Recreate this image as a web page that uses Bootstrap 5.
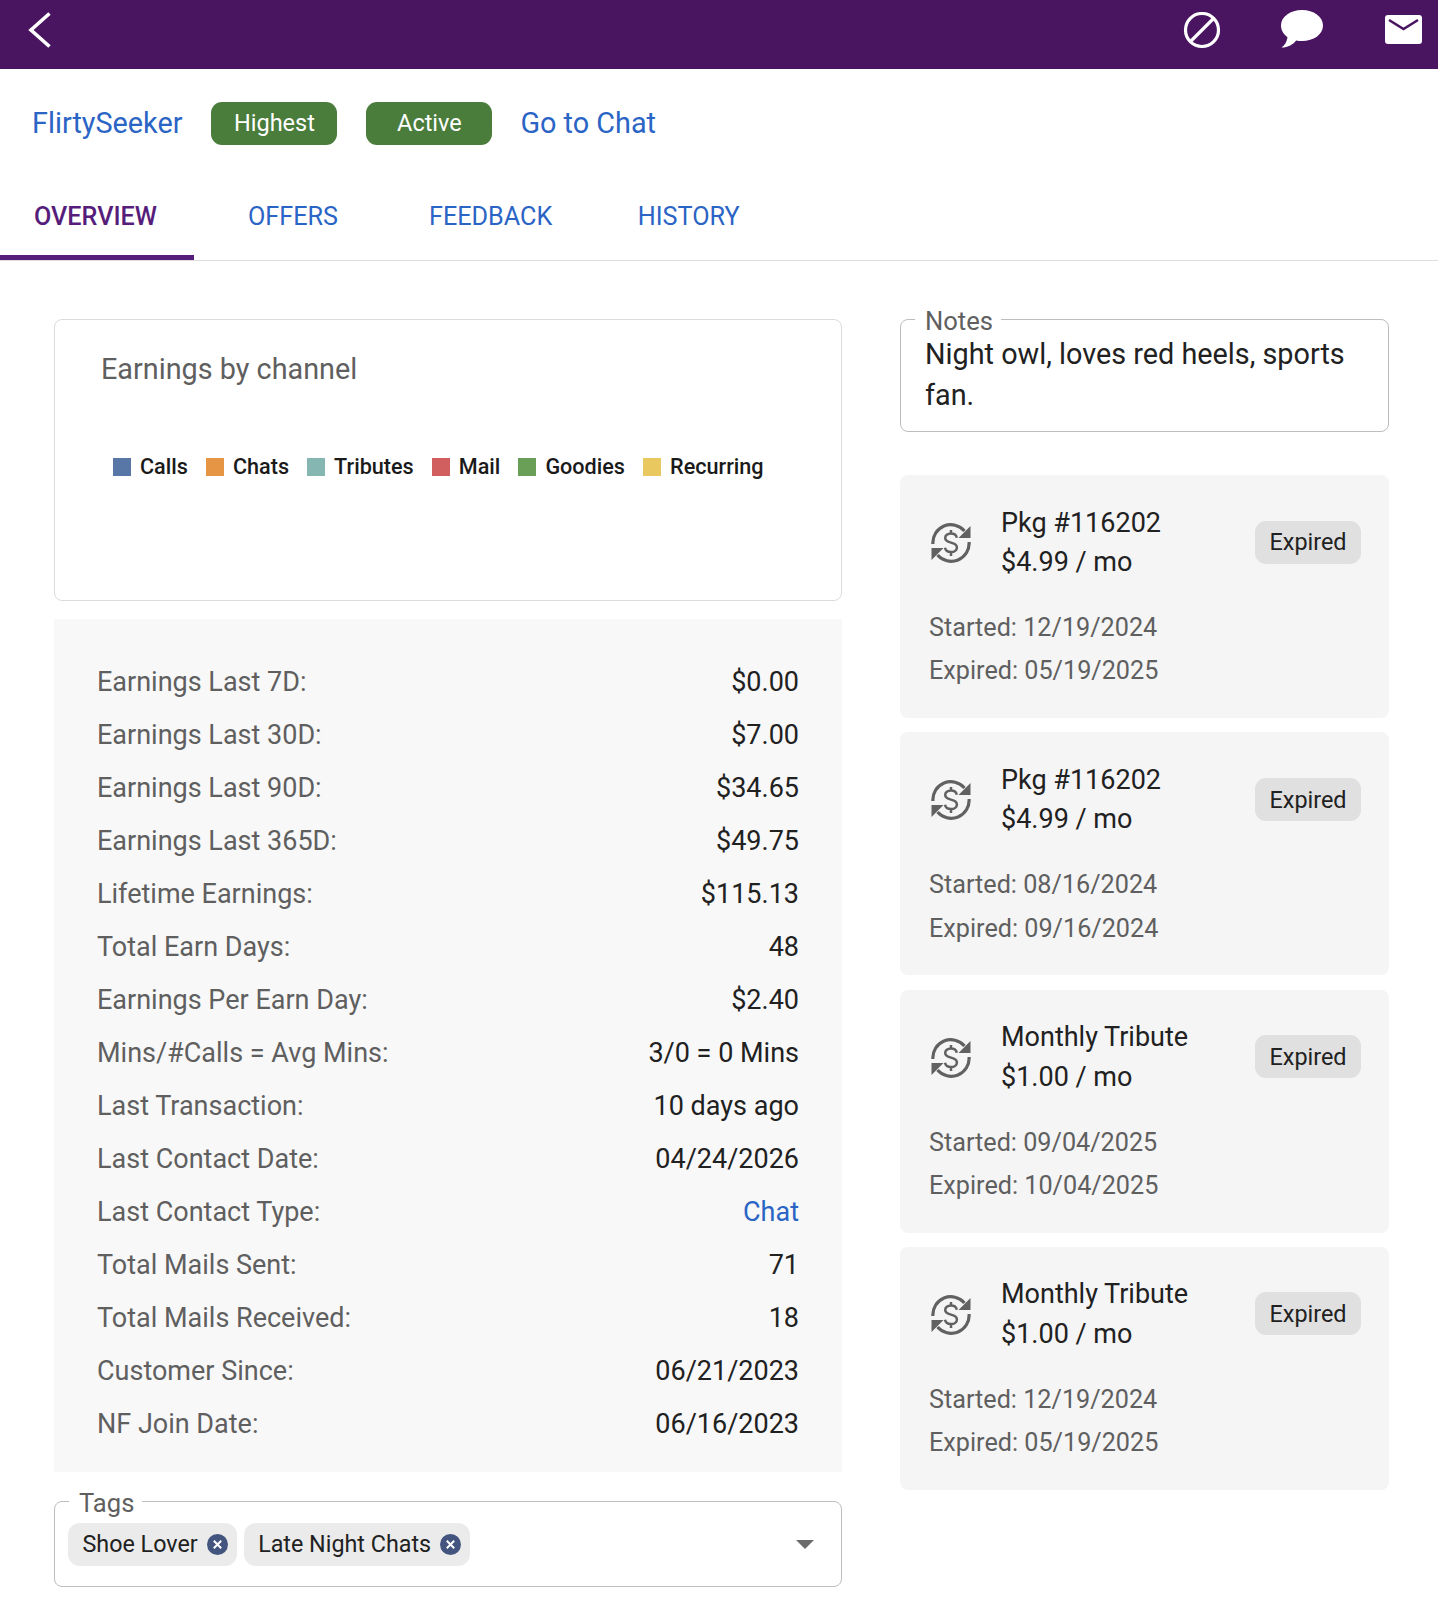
<!DOCTYPE html>
<html lang="en">
<head>
    <meta charset="UTF-8">
    <meta name="viewport" content="width=device-width, initial-scale=1.0">
    <title>Customer Overview</title>
    <link rel="stylesheet" href="https://cdn.jsdelivr.net/npm/bootstrap@5.3.0/dist/css/bootstrap.min.css">
    <style>
        body { font-family: Roboto, "Liberation Sans", sans-serif; font-size: 27px; color: #212121; background: #fff; }
        a { text-decoration: none; color: #2a64c5; }
        .top-bar { height: 69px; background: #4a1560; padding: 12px 16px 0 28px; }
        .top-gap-a { margin-left: auto; }
        .top-gap-b { margin-left: 60px; }
        .top-gap-c { margin-left: 62px; }
        .head-row { height: 43px; margin-top: 33px; padding-left: 32px; font-size: 28.8px; }
        .pill-green { width: 126px; height: 43px; margin-left: 29px; background: #4a7c3c; color: #fff; border-radius: 11px; font-size: 23.5px; }
        .head-link { margin-left: 28px; }
        .tab-row { height: 116px; border-bottom: 1px solid #dedede; }
        .tab-link { font-size: 25.2px; font-weight: 400; height: 115px; padding-top: 53px; display: block; }
        .tab-on { color: #561d7a; font-weight: 500; width: 194px; padding-left: 34px; border-bottom: 5px solid #561d7a; }
        .tab-b { margin-left: 54px; }
        .tab-c { margin-left: 91px; }
        .tab-d { margin-left: 85.5px; }
        .page-body { padding: 58px 49px 0 54px; gap: 58px; }
        .col-left { width: 788px; flex: none; }
        .col-right { width: 489px; flex: none; }
        .chart-box { height: 282px; border: 1px solid #dcdcdc; border-radius: 8px; padding: 31px 46px 0; }
        .chart-title { font-size: 28.8px; line-height: 36px; color: #5f5f5f; }
        .legend-row { margin-top: 66px; padding-left: 12px; gap: 18.1px; font-size: 21.6px; font-weight: 500; line-height: 28px; color: #1a1a1a; }
        .legend-item { gap: 9px; }
        .swatch { width: 18px; height: 18px; }
        .stat-panel { margin-top: 18px; height: 853px; background: #f8f8f8; padding: 37px 43px 0; }
        .stat-line { height: 53px; line-height: 53px; }
        .stat-key { color: #5f5f5f; }
        .field-box { border: 1px solid #bdbdbd; border-radius: 8px; margin: 0; padding: 0 24px; }
        .field-box legend { float: none; width: auto; margin: 0 0 0 -10px; padding: 4px 8px 0 10px; font-size: 25.6px; line-height: 20px; color: #5f5f5f; }
        .notes-text { font-size: 28.8px; line-height: 41px; margin-top: 3px; }
        .notes-box { height: 125px; margin-top: -12px; }
        .pkg-box { height: 243px; background: #f5f5f5; border-radius: 8px; margin-top: 14.3px; padding: 28px 28px 0 29px; }
        .pkg-first { margin-top: 43px; }
        .pkg-head { height: 78px; }
        .pkg-icon { width: 40px; height: 40px; margin: 2px 30px 0 2px; flex: none; }
        .pkg-name { line-height: 39.5px; margin-top: 2px; }
        .pill-grey { width: 106px; height: 43px; padding-top: 2px; background: #e0e0e0; border-radius: 11px; font-size: 23.4px; margin-left: auto; }
        .pkg-meta { margin-top: 25px; color: #5f5f5f; font-size: 25.2px; line-height: 43.4px; }
        .tag-box { height: 98px; margin-top: 17px; padding: 0 27px 0 13px; }
        .tag-box legend { margin-left: 1px; }
        .tag-row { margin-top: 10px; }
        .tag-chip { height: 43px; background: #ebebeb; border-radius: 12px; margin-right: 7px; padding: 0 9px 0 14.5px; font-size: 23.3px; gap: 9px; }
        .tag-x { width: 21px; height: 21px; flex: none; }
        .tag-arrow { margin-left: auto; width: 0; height: 0; border-left: 9px solid transparent; border-right: 9px solid transparent; border-top: 9px solid #6b6b6b; }
    </style>
</head>
<body>
<svg class="d-none">
    <symbol id="pkgIcon" viewBox="0 0 40 40">
        <g fill="none" stroke="#616161" stroke-width="3.2">
            <path d="M1.9 21A18 18 0 0 1 33.5 8"/>
            <path d="M38.1 19A18 18 0 0 1 6.5 32"/>
            <path stroke-width="2.5" d="M25.8 14.7C25.3 12 23.2 10.5 20 10.5c-3.500 0-5.800 1.900-5.800 4.500 0 2.700 2.300 3.800 5.800 4.600 3.500.8 5.900 2 5.900 4.800 0 2.700-2.500 4.600-5.900 4.600-3.300 0-5.500-1.600-6-4.200M20 7v3.500M20 29v4"/>
        </g>
        <path fill="#616161" d="M39.500 3v12h-12zM.5 37v-12h12z"/>
    </symbol>
    <symbol id="tagX" viewBox="0 0 21 21">
        <circle cx="10.500" cy="10.500" r="10.500" fill="#43557e"/>
        <path d="M6.800 6.800l7.400 7.400M14.200 6.800l-7.400 7.400" stroke="#fff" stroke-width="2"/>
    </symbol>
</svg>

<nav class="top-bar d-flex align-items-start">
    <svg width="24" height="36" viewBox="0 0 24 36"><path d="M21.500 1.500L3 18l18.500 16.500" fill="none" stroke="#fff" stroke-width="3.600"/></svg>
    <svg class="top-gap-a" width="38" height="38" viewBox="0 0 38 38"><circle cx="19" cy="18" r="16.500" fill="none" stroke="#fff" stroke-width="3.200"/><path d="M8 29L30 7" stroke="#fff" stroke-width="3.200"/></svg>
    <svg class="top-gap-b" width="42" height="38" viewBox="0 0 42 38" style="margin-top:-2px"><path fill="#fff" d="M21 0c11.600 0 21 6.500 21 15.500S32.600 31 21 31c-2 0-4-.2-5.800-.6C12.500 34 7 37.500.5 37.500c3-2 5.400-5.600 6-10.300C2.600 24.400 0 20.200 0 15.500 0 6.500 9.400 0 21 0z"/></svg>
    <svg class="top-gap-c" width="37" height="30" viewBox="0 0 37 30" style="margin-top:3px"><rect width="37" height="29" rx="3" fill="#fff"/><path d="M4 5l14.500 9L33 5" fill="none" stroke="#4a1560" stroke-width="2.600"/></svg>
</nav>

<div class="head-row d-flex align-items-center">
    <a href="#">FlirtySeeker</a>
    <span class="pill-green d-flex align-items-center justify-content-center">Highest</span>
    <span class="pill-green d-flex align-items-center justify-content-center">Active</span>
    <a href="#" class="head-link">Go to Chat</a>
</div>

<div class="tab-row d-flex">
    <a href="#" class="tab-link tab-on">OVERVIEW</a>
    <a href="#" class="tab-link tab-b">OFFERS</a>
    <a href="#" class="tab-link tab-c">FEEDBACK</a>
    <a href="#" class="tab-link tab-d">HISTORY</a>
</div>

<div class="page-body d-flex align-items-start">
    <div class="col-left">
        <div class="chart-box">
            <div class="chart-title">Earnings by channel</div>
            <div class="legend-row d-flex" id="legendRow"></div>
        </div>
        <div class="stat-panel" id="statPanel"></div>
        <fieldset class="field-box tag-box">
            <legend>Tags</legend>
            <div class="tag-row d-flex align-items-center">
                <span class="tag-chip d-flex align-items-center">Shoe Lover <svg class="tag-x"><use href="#tagX"/></svg></span>
                <span class="tag-chip d-flex align-items-center">Late Night Chats <svg class="tag-x"><use href="#tagX"/></svg></span>
                <span class="tag-arrow"></span>
            </div>
        </fieldset>
    </div>
    <div class="col-right" id="rightCol">
        <fieldset class="field-box notes-box">
            <legend>Notes</legend>
            <div class="notes-text">Night owl, loves red heels, sports fan.</div>
        </fieldset>
    </div>
</div>

<script>
    // Chart legend
    const legend = [['Calls', '#5877a6'], ['Chats', '#e69545'], ['Tributes', '#86b6b1'], ['Mail', '#d15f5f'], ['Goodies', '#6a9f58'], ['Recurring', '#e9c95f']];
    document.getElementById('legendRow').innerHTML = legend.map(l =>
        `<span class="legend-item d-flex align-items-center"><span class="swatch" style="background:${l[1]}"></span>${l[0]}</span>`).join('');

    // Stats
    const stats = [
        ['Earnings Last 7D:', '$0.00'], ['Earnings Last 30D:', '$7.00'], ['Earnings Last 90D:', '$34.65'],
        ['Earnings Last 365D:', '$49.75'], ['Lifetime Earnings:', '$115.13'], ['Total Earn Days:', '48'],
        ['Earnings Per Earn Day:', '$2.40'], ['Mins/#Calls = Avg Mins:', '3/0 = 0 Mins'], ['Last Transaction:', '10 days ago'],
        ['Last Contact Date:', '04/24/2026'], ['Last Contact Type:', '<a href="#">Chat</a>'], ['Total Mails Sent:', '71'],
        ['Total Mails Received:', '18'], ['Customer Since:', '06/21/2023'], ['NF Join Date:', '06/16/2023']
    ];
    document.getElementById('statPanel').innerHTML = stats.map(s =>
        `<div class="stat-line d-flex justify-content-between"><span class="stat-key">${s[0]}</span><span>${s[1]}</span></div>`).join('');

    // Packages
    const pkgs = [
        ['Pkg #116202', '$4.99 / mo', '12/19/2024', '05/19/2025'],
        ['Pkg #116202', '$4.99 / mo', '08/16/2024', '09/16/2024'],
        ['Monthly Tribute', '$1.00 / mo', '09/04/2025', '10/04/2025'],
        ['Monthly Tribute', '$1.00 / mo', '12/19/2024', '05/19/2025']
    ];
    document.getElementById('rightCol').insertAdjacentHTML('beforeend', pkgs.map((p, i) => `
        <div class="pkg-box ${i === 0 ? 'pkg-first' : ''}">
            <div class="pkg-head d-flex align-items-center">
                <svg class="pkg-icon"><use href="#pkgIcon"/></svg>
                <div class="pkg-name">${p[0]}<br>${p[1]}</div>
                <span class="pill-grey d-flex align-items-center justify-content-center">Expired</span>
            </div>
            <div class="pkg-meta">Started: ${p[2]}<br>Expired: ${p[3]}</div>
        </div>`).join(''));
</script>
<script src="https://cdn.jsdelivr.net/npm/bootstrap@5.3.0/dist/js/bootstrap.bundle.min.js"></script>
</body>
</html>
